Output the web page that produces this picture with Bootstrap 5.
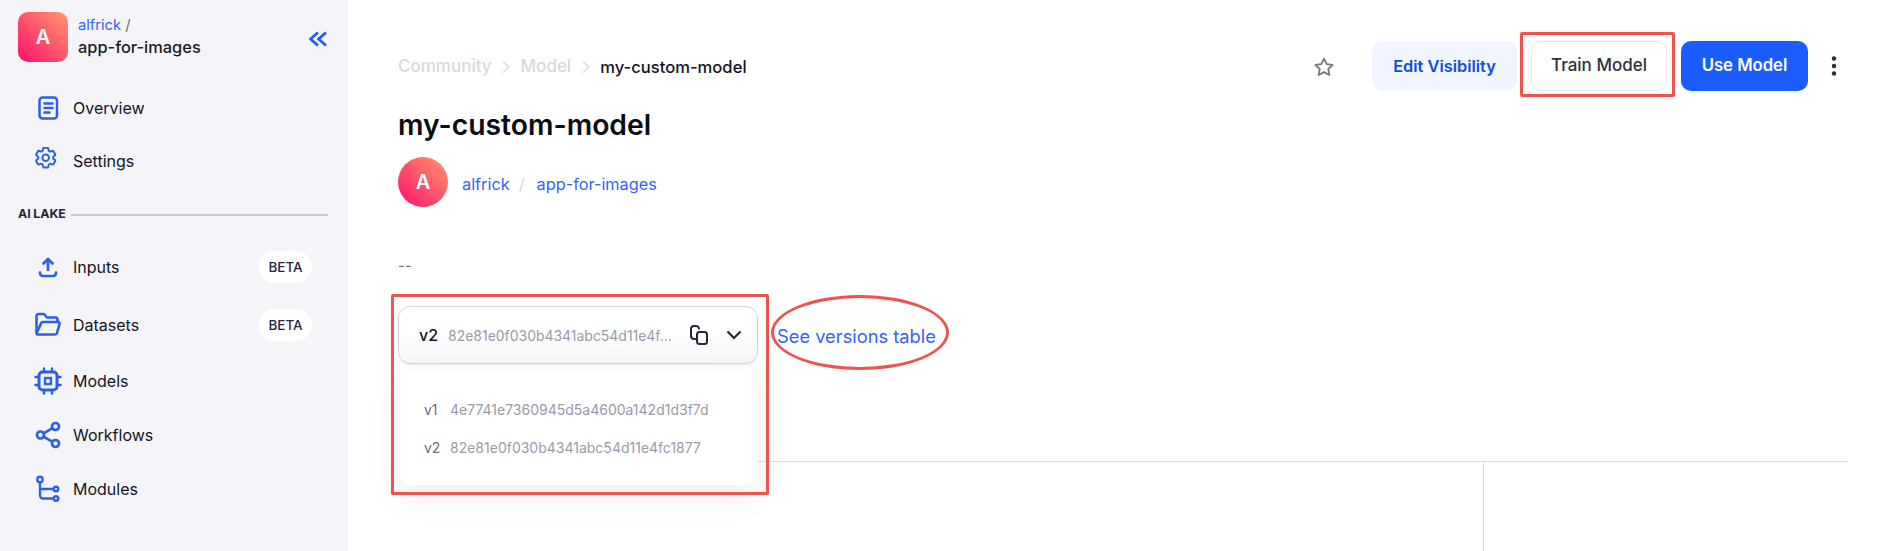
<!DOCTYPE html>
<html lang="en">
<head>
<meta charset="utf-8">
<title>my-custom-model</title>
<link href="https://cdn.jsdelivr.net/npm/bootstrap@5.3.0/dist/css/bootstrap.min.css" rel="stylesheet">
<style>
html,body{height:100%;overflow:hidden}
body{font-family:Inter,"Liberation Sans",sans-serif;color:#141420;background:#fff;font-size:16px}
a{text-decoration:none}
.shell{height:551px}
.side{width:348px;background:#f4f4f9;flex:none}
.side-head{padding:12px 20px 0 18px;height:81px}
.logo-tile{width:50px;height:50px;border-radius:10px;background:linear-gradient(45deg,#ff1f6b 12%,#ff9a6c 100%);color:#fff;font-weight:600;font-size:20px}
.name-stack{margin-left:10px;margin-top:3px}
.crumb-owner{font-size:14.7px;line-height:20px;color:#3461ff}
.crumb-owner span{color:#6b6b78;font-size:15px}
.crumb-app{font-weight:500;font-size:16.4px;line-height:24px;color:#1c1c28}
.collapse-ico{margin-left:auto;margin-top:19px;flex:none}
.nav-line{padding-left:34px;padding-right:36px;gap:11px;color:#141420;height:54px;font-size:16px}
.nav-line.h53{height:53px}
.nav-line.h58{height:58px}
.nav-line svg{width:28px;height:28px;flex:none}
.beta-pill{margin-left:auto;width:53px;height:32px;border-radius:16px;background:#fff;font-size:13.5px;font-weight:500;color:#26263a}
.lake-row{height:51px;padding:4px 20px 0 18px}
.lake-row b{font-size:12.4px;font-weight:700;color:#26263a;letter-spacing:-.1px}
.lake-row i{flex:1;height:2px;background:#c9c9ce;margin-left:5px}
.work{padding:41px 49px 0 50px;min-width:0;position:relative}
.top-row{height:50px}
.path-row{font-size:17px;font-weight:500;color:#d4d9e2;padding-top:2px}
.path-row svg{margin:0 10.500px}
.path-row .here{color:#141420;font-size:16.6px}
.act{height:50px;border-radius:10px;font-weight:600;font-size:16.4px;padding:0;display:flex;align-items:center;justify-content:center}
.act-edit{width:145px;background:#f0f5ff;color:#0e4fdc;border:0;margin-left:37px}
.act-train{width:136px;background:#fff;color:#30303c;border:1px solid #e6e6ea;margin-left:14px;font-weight:500;font-size:17px}
.act-use{width:127px;background:#1b5cff;color:#fff;border:0;margin-left:14px;font-size:16.7px}
.dots{width:26px;margin-left:13px}
.star-ico{margin-top:2px}
.model-name{font-size:28.3px;font-weight:600;line-height:34px;color:#0b0b14;margin:17px 0 0}
.owner-line{margin-top:15px;height:50px;font-size:16.3px}
.round-a{width:50px;height:50px;border-radius:50%;background:linear-gradient(45deg,#ff1f6b 12%,#ff9a6c 100%);color:#fff;font-weight:600;font-size:20px;margin-right:14px}
.owner-line a,.owner-line .sep{padding-top:5px}
.owner-line a{color:#3461ff}
.owner-line .sep{color:#d4d9e2;margin:0 12px 0 9px}
.dash-note{margin-top:49px;height:20px;line-height:20px;color:#6b7280;font-size:15px}
.pick-row{margin-top:30px;height:58px}
.pick-box{width:360px;height:58px;border:1px solid #d5d5df;border-radius:12px;background:linear-gradient(#fff 45%,#f5f5f8);padding:0 14px 0 20px;font-size:14px;box-shadow:0 1px 2px rgba(20,20,40,.08)}
.pick-box .vv{font-size:16px;font-weight:500;color:#141420;margin-right:10px}
.pick-box .hh{color:#9a9aa6;flex:1;white-space:nowrap;letter-spacing:-.03px}
.vers-link{font-size:18.3px;color:#3461ff;margin-left:19px;padding-top:3px}
.pick-menu{position:absolute;left:50px;top:371px;width:360px;height:114px;background:#fff;border-radius:14px;box-shadow:0 12px 34px rgba(20,20,40,.07);padding:20px 26px;font-size:14px;z-index:3}
.pick-menu div{height:37.500px;display:flex;align-items:center;color:#6b6b78}
.pick-menu em{font-style:normal;width:26px;flex:none}
.pick-menu span{color:#9a9aa6}
.split{margin-top:97px;border-top:1px solid #dddce8;height:90px}
.split-left{width:1086px;border-right:1px solid #dddce8}
.mark-rect{position:absolute;border:3.500px solid #ef5350;border-radius:2px;z-index:4;pointer-events:none}
.mark-a{left:1172px;top:32px;width:155px;height:65px}
.mark-b{left:43px;top:294px;width:378px;height:201px}
.mark-oval{position:absolute;left:423px;top:295px;width:178px;height:75px;border:3.500px solid #ef5350;border-radius:50%;z-index:4;pointer-events:none}
</style>
</head>
<body>
<div class="shell d-flex">
  <aside class="side">
    <div class="side-head d-flex">
      <div class="logo-tile d-flex align-items-center justify-content-center">A</div>
      <div class="name-stack">
        <div class="crumb-owner">alfrick <span>/</span></div>
        <div class="crumb-app">app-for-images</div>
      </div>
      <svg class="collapse-ico" width="20" height="16" viewBox="0 0 20 16" fill="none" stroke="#1f5aff" stroke-width="2.800" stroke-linejoin="round"><path d="M10 1.500 2.500 8l7.500 6.500M18 1.500 10.500 8l7.500 6.500"/></svg>
    </div>
    <a class="nav-line h53 d-flex align-items-center" href="#">
      <svg viewBox="0 0 28 28" fill="none" stroke="#2d60ea" stroke-width="2.500" stroke-linecap="round"><rect x="5.500" y="3.500" width="17.500" height="21" rx="3"/><path d="M10.500 9.500h8M10.500 14h8M10.500 18.500h5"/></svg>Overview</a>
    <a class="nav-line h53 d-flex align-items-center" href="#">
      <svg viewBox="0 0 28 28" fill="none" stroke="#2d60ea" stroke-width="1.800" stroke-linejoin="round"><g transform="translate(-1.500 -2.500) scale(1.100)"><path d="M9.594 3.940c.09-.542.56-.94 1.110-.94h2.593c.55 0 1.020.398 1.110.94l.213 1.281c.063.374.313.686.645.870.074.04.147.083.22.127.324.196.72.257 1.075.124l1.217-.456a1.125 1.125 0 011.370.49l1.296 2.247a1.125 1.125 0 01-.26 1.431l-1.003.827c-.293.24-.438.613-.431.992a6.759 6.759 0 010 .255c-.007.378.138.75.43.99l1.005.828c.424.35.534.954.26 1.430l-1.298 2.247a1.125 1.125 0 01-1.369.491l-1.217-.456c-.355-.133-.75-.072-1.076.124a6.570 6.570 0 01-.22.128c-.331.183-.581.495-.644.869l-.213 1.280c-.09.543-.56.941-1.110.941h-2.594c-.55 0-1.020-.398-1.110-.94l-.213-1.281c-.062-.374-.312-.686-.644-.870a6.520 6.520 0 01-.22-.127c-.325-.196-.72-.257-1.076-.124l-1.217.456a1.125 1.125 0 01-1.369-.49l-1.297-2.247a1.125 1.125 0 01.26-1.431l1.004-.827c.292-.24.437-.613.43-.992a6.932 6.932 0 010-.255c.007-.378-.138-.75-.43-.99l-1.004-.828a1.125 1.125 0 01-.26-1.430l1.297-2.247a1.125 1.125 0 011.370-.491l1.216.456c.356.133.751.072 1.076-.124.072-.044.146-.087.22-.128.332-.183.582-.495.644-.869l.214-1.281z"/><circle cx="12" cy="12" r="3"/></g></svg>Settings</a>
    <div class="lake-row d-flex align-items-center"><b>AI LAKE</b><i></i></div>
    <a class="nav-line h58 d-flex align-items-center" href="#">
      <svg viewBox="0 0 28 28" fill="none" stroke="#2d60ea" stroke-width="2.700" stroke-linecap="round" stroke-linejoin="round"><path d="M14 17V6M9.500 10.500 14 6l4.500 4.500M6 19.500V20a3 3 0 003 3h10a3 3 0 003-3v-.5"/></svg>Inputs<span class="beta-pill d-flex align-items-center justify-content-center">BETA</span></a>
    <a class="nav-line h58 d-flex align-items-center" href="#">
      <svg viewBox="0 0 28 28" fill="none" stroke="#2d60ea" stroke-width="2.600" stroke-linejoin="round"><path d="M2.500 22V5a2 2 0 012-2h5.500l3 3.500h8.500a2 2 0 012 2V11M2.500 22.500a1.500 1.500 0 001.500 1h17a2 2 0 002-1.500l2.500-9a1.500 1.500 0 00-1.500-2H9a2 2 0 00-2 1.500z"/></svg>Datasets<span class="beta-pill d-flex align-items-center justify-content-center">BETA</span></a>
    <a class="nav-line d-flex align-items-center" href="#">
      <svg viewBox="0 0 28 28" fill="none" stroke="#2d60ea" stroke-width="3" stroke-linecap="round"><rect x="5" y="5" width="18" height="18" rx="3.500"/><rect x="11" y="11" width="6" height="6" stroke-width="2.400"/><path d="M10 1.500V4M18 1.500V4M10 24v2.500M18 24v2.500M1.500 10H4M1.500 18H4M24 10h2.500M24 18h2.500" stroke-width="2.400"/></svg>Models</a>
    <a class="nav-line d-flex align-items-center" href="#">
      <svg viewBox="0 0 28 28" fill="none" stroke="#2d60ea" stroke-width="2.700"><circle cx="6.500" cy="14" r="3.500"/><circle cx="21.500" cy="5.500" r="3.500"/><circle cx="21.500" cy="22.500" r="3.500"/><path d="M9.500 12.300 18.500 7.200M9.500 15.700l9 5.100"/></svg>Workflows</a>
    <a class="nav-line d-flex align-items-center" href="#">
      <svg viewBox="0 0 28 28" fill="none" stroke="#2d60ea" stroke-width="2.400"><circle cx="6" cy="4.500" r="2.700"/><circle cx="22" cy="14" r="2.300"/><circle cx="22" cy="23.500" r="2.300"/><path d="M6 7.200V20.500a3 3 0 003 3h10.700M6 14h13.700"/></svg>Modules</a>
  </aside>

  <main class="work flex-grow-1">
    <div class="top-row d-flex align-items-center">
      <div class="path-row d-flex align-items-center">
        <span>Community</span>
        <svg width="8" height="14" viewBox="0 0 8 14" fill="none" stroke="#d4d9e2" stroke-width="1.300"><path d="m1 1.500 6 5.500-6 5.500"/></svg>
        <span>Model</span>
        <svg width="8" height="14" viewBox="0 0 8 14" fill="none" stroke="#d4d9e2" stroke-width="1.300"><path d="m1 1.500 6 5.500-6 5.500"/></svg>
        <span class="here">my-custom-model</span>
      </div>
      <svg class="star-ico ms-auto" width="22" height="22" viewBox="0 0 24 24" fill="none" stroke="#77777f" stroke-width="2" stroke-linejoin="round"><path d="m12 2.800 2.900 6 6.500.9-4.700 4.500 1.100 6.500-5.800-3.100-5.800 3.100 1.100-6.500-4.700-4.500 6.500-.9z"/></svg>
      <button class="act act-edit" type="button">Edit Visibility</button>
      <button class="act act-train" type="button">Train Model</button>
      <button class="act act-use" type="button">Use Model</button>
      <svg class="dots" height="24" viewBox="0 0 26 24" fill="#2c2c38"><circle cx="13" cy="4.500" r="2.200"/><circle cx="13" cy="12" r="2.200"/><circle cx="13" cy="19.500" r="2.200"/></svg>
    </div>
    <h1 class="model-name">my-custom-model</h1>
    <div class="owner-line d-flex align-items-center">
      <div class="round-a d-flex align-items-center justify-content-center">A</div>
      <a href="#">alfrick</a><span class="sep">/</span><a href="#">app-for-images</a>
    </div>
    <div class="dash-note">--</div>
    <div class="pick-row d-flex align-items-center">
      <div class="pick-box d-flex align-items-center">
        <span class="vv">v2</span><span class="hh">82e81e0f030b4341abc54d11e4f...</span>
        <svg class="me-3" width="20" height="22" viewBox="0 0 20 22" fill="none" stroke="#26263a" stroke-width="2" stroke-linecap="round" stroke-linejoin="round"><rect x="8" y="8" width="10" height="12" rx="2.500"/><path d="M8 15H5a3 3 0 01-3-3V5a3 3 0 013-3h2.500A3 3 0 0110 4.500"/></svg>
        <svg width="18" height="12" viewBox="0 0 18 12" fill="none" stroke="#26263a" stroke-width="2.200"><path d="m2.500 2.500 6.500 6.500 6.500-6.500"/></svg>
      </div>
      <a class="vers-link" href="#">See versions table</a>
    </div>
    <div class="split d-flex"><div class="split-left"></div></div>
    <div class="pick-menu">
      <div><em>v1</em><span>4e7741e7360945d5a4600a142d1d3f7d</span></div>
      <div><em>v2</em><span>82e81e0f030b4341abc54d11e4fc1877</span></div>
    </div>
    <div class="mark-rect mark-a"></div>
    <div class="mark-rect mark-b"></div>
    <div class="mark-oval"></div>
  </main>
</div>
<script src="https://cdn.jsdelivr.net/npm/bootstrap@5.3.0/dist/js/bootstrap.bundle.min.js"></script>
</body>
</html>
